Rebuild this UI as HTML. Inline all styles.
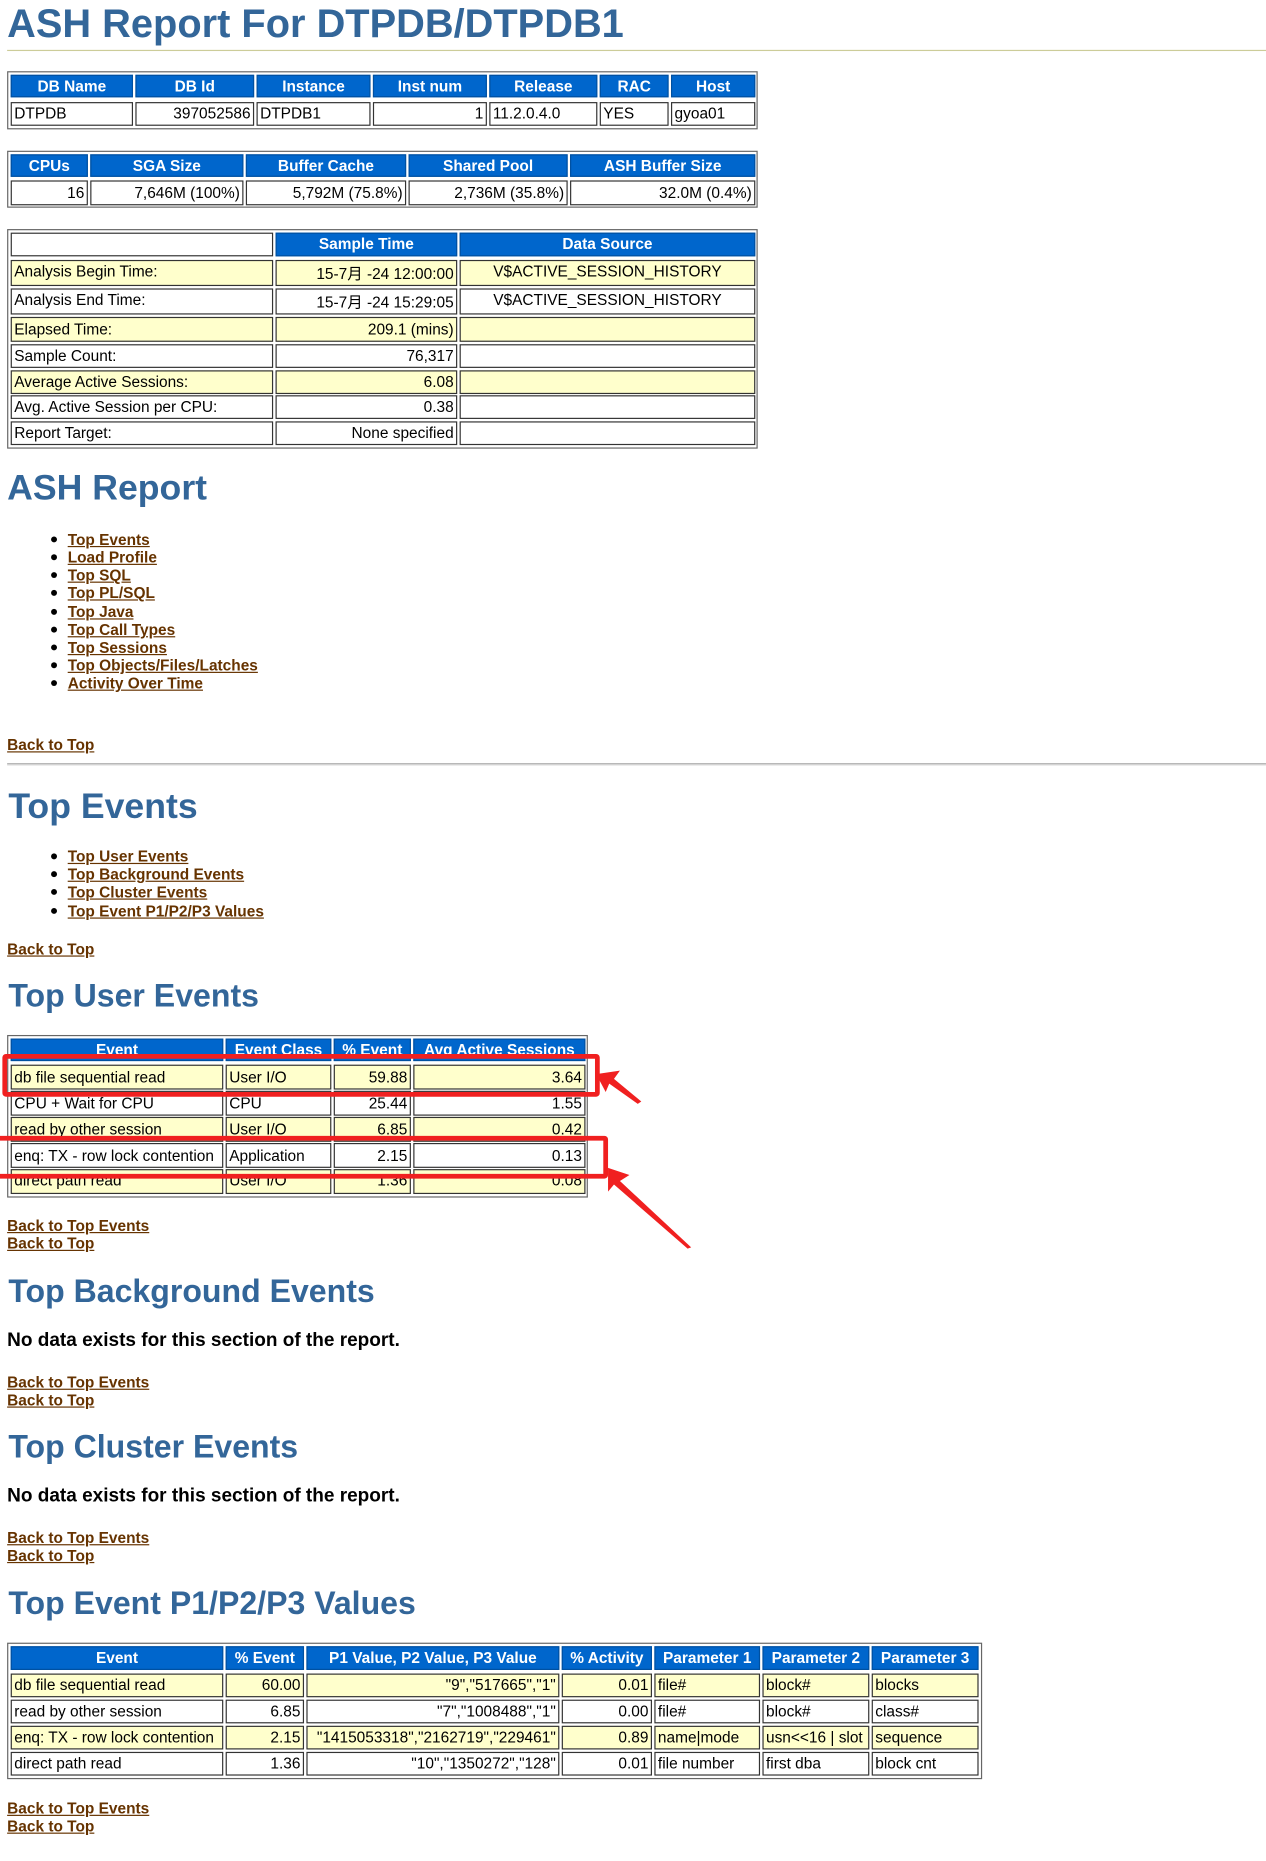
<!DOCTYPE html>
<html><head><meta charset="utf-8"><style>
html,body{margin:0;padding:0;background:#fff;width:1266px;height:1861px;overflow:hidden}
#w{position:absolute;left:0;top:0;width:1066px;height:1568px;transform:scale(1.1876,1.1869);transform-origin:0 0;font-family:"Liberation Sans","Noto Sans CJK SC",sans-serif}
#w div{position:absolute;box-sizing:border-box;white-space:nowrap}
.o{border:1px solid #666;}
.c{border:1px solid #333;font-size:13px;padding:0 2px;overflow:hidden;background:#fff;color:#000}
.h{background:#0066cc;color:#fff;font-weight:bold;text-align:center;border-color:#0050a0!important}
.y{background:#ffffcc}
.r{text-align:right}
.ctr{text-align:center}
.t{color:#336699;font-weight:bold}
.l{font-size:13px;font-weight:bold;color:#663300;text-decoration:underline;line-height:15px}
.b{width:5px;height:5px;border-radius:50%;background:#000}
.rb{border:4px solid #f02020;border-radius:3px}
</style></head><body><div id="w">
<div class="t" style="left:6px;top:2px;font-size:33.5px;line-height:38px">ASH Report For DTPDB/DTPDB1</div>
<div style="left:6px;top:42px;width:1060px;height:1px;background:#cccc99"></div>

<div class="o" style="left:6px;top:60px;width:632px;height:49px"></div>
<div class="c h" style="left:9px;top:63px;width:103px;height:19px;line-height:17px">DB Name</div>
<div class="c h" style="left:114px;top:63px;width:100px;height:19px;line-height:17px">DB Id</div>
<div class="c h" style="left:216px;top:63px;width:96px;height:19px;line-height:17px">Instance</div>
<div class="c h" style="left:314px;top:63px;width:96px;height:19px;line-height:17px">Inst num</div>
<div class="c h" style="left:412px;top:63px;width:91px;height:19px;line-height:17px">Release</div>
<div class="c h" style="left:505px;top:63px;width:58px;height:19px;line-height:17px">RAC</div>
<div class="c h" style="left:565px;top:63px;width:71px;height:19px;line-height:17px">Host</div>
<div class="c" style="left:9px;top:86px;width:103px;height:20px;line-height:18px">DTPDB</div>
<div class="c r" style="left:114px;top:86px;width:100px;height:20px;line-height:18px">397052586</div>
<div class="c" style="left:216px;top:86px;width:96px;height:20px;line-height:18px">DTPDB1</div>
<div class="c r" style="left:314px;top:86px;width:96px;height:20px;line-height:18px">1</div>
<div class="c" style="left:412px;top:86px;width:91px;height:20px;line-height:18px">11.2.0.4.0</div>
<div class="c" style="left:505px;top:86px;width:58px;height:20px;line-height:18px">YES</div>
<div class="c" style="left:565px;top:86px;width:71px;height:20px;line-height:18px">gyoa01</div>

<div class="o" style="left:6px;top:127px;width:632px;height:48px"></div>
<div class="c h" style="left:9px;top:130px;width:65px;height:19px;line-height:17px">CPUs</div>
<div class="c h" style="left:76px;top:130px;width:129px;height:19px;line-height:17px">SGA Size</div>
<div class="c h" style="left:207px;top:130px;width:135px;height:19px;line-height:17px">Buffer Cache</div>
<div class="c h" style="left:344px;top:130px;width:134px;height:19px;line-height:17px">Shared Pool</div>
<div class="c h" style="left:480px;top:130px;width:156px;height:19px;line-height:17px">ASH Buffer Size</div>
<div class="c r" style="left:9px;top:152px;width:65px;height:21px;line-height:19px">16</div>
<div class="c r" style="left:76px;top:152px;width:129px;height:21px;line-height:19px">7,646M (100%)</div>
<div class="c r" style="left:207px;top:152px;width:135px;height:21px;line-height:19px">5,792M (75.8%)</div>
<div class="c r" style="left:344px;top:152px;width:134px;height:21px;line-height:19px">2,736M (35.8%)</div>
<div class="c r" style="left:480px;top:152px;width:156px;height:21px;line-height:19px">32.0M (0.4%)</div>

<div class="o" style="left:6px;top:193px;width:632px;height:185px"></div>
<div class="c" style="left:9px;top:196px;width:221px;height:20px"></div>
<div class="c h" style="left:232px;top:196px;width:153px;height:20px;line-height:18px">Sample Time</div>
<div class="c h" style="left:387px;top:196px;width:249px;height:20px;line-height:18px">Data Source</div>

<div class="c y" style="left:9px;top:219px;width:221px;height:22px;line-height:18px">Analysis Begin Time:</div>
<div class="c y r" style="left:232px;top:219px;width:153px;height:22px;line-height:22px">15-7月 -24 12:00:00</div>
<div class="c y ctr" style="left:387px;top:219px;width:249px;height:22px;line-height:18px">V$ACTIVE_SESSION_HISTORY</div>
<div class="c" style="left:9px;top:243px;width:221px;height:22px;line-height:18px">Analysis End Time:</div>
<div class="c r" style="left:232px;top:243px;width:153px;height:22px;line-height:22px">15-7月 -24 15:29:05</div>
<div class="c ctr" style="left:387px;top:243px;width:249px;height:22px;line-height:18px">V$ACTIVE_SESSION_HISTORY</div>
<div class="c y" style="left:9px;top:267px;width:221px;height:21px;line-height:19px">Elapsed Time:</div>
<div class="c y r" style="left:232px;top:267px;width:153px;height:21px;line-height:19px">209.1 (mins)</div>
<div class="c y" style="left:387px;top:267px;width:249px;height:21px"></div>
<div class="c" style="left:9px;top:290px;width:221px;height:20px;line-height:18px">Sample Count:</div>
<div class="c r" style="left:232px;top:290px;width:153px;height:20px;line-height:18px">76,317</div>
<div class="c" style="left:387px;top:290px;width:249px;height:20px"></div>
<div class="c y" style="left:9px;top:312px;width:221px;height:20px;line-height:18px">Average Active Sessions:</div>
<div class="c y r" style="left:232px;top:312px;width:153px;height:20px;line-height:18px">6.08</div>
<div class="c y" style="left:387px;top:312px;width:249px;height:20px"></div>
<div class="c" style="left:9px;top:333px;width:221px;height:20px;line-height:18px">Avg. Active Session per CPU:</div>
<div class="c r" style="left:232px;top:333px;width:153px;height:20px;line-height:18px">0.38</div>
<div class="c" style="left:387px;top:333px;width:249px;height:20px"></div>
<div class="c" style="left:9px;top:355px;width:221px;height:20px;line-height:18px">Report Target:</div>
<div class="c r" style="left:232px;top:355px;width:153px;height:20px;line-height:18px">None specified</div>
<div class="c" style="left:387px;top:355px;width:249px;height:20px"></div>

<div class="t" style="left:6px;top:394px;font-size:30px;line-height:36px">ASH Report</div>
<div class="b" style="left:43px;top:452px"></div><div class="l" style="left:57px;top:447px">Top Events</div>
<div class="b" style="left:43px;top:467px"></div><div class="l" style="left:57px;top:462px">Load Profile</div>
<div class="b" style="left:43px;top:482px"></div><div class="l" style="left:57px;top:477px">Top SQL</div>
<div class="b" style="left:43px;top:497px"></div><div class="l" style="left:57px;top:492px">Top PL/SQL</div>
<div class="b" style="left:43px;top:513px"></div><div class="l" style="left:57px;top:508px">Top Java</div>
<div class="b" style="left:43px;top:528px"></div><div class="l" style="left:57px;top:523px">Top Call Types</div>
<div class="b" style="left:43px;top:543px"></div><div class="l" style="left:57px;top:538px">Top Sessions</div>
<div class="b" style="left:43px;top:558px"></div><div class="l" style="left:57px;top:553px">Top Objects/Files/Latches</div>
<div class="b" style="left:43px;top:573px"></div><div class="l" style="left:57px;top:568px">Activity Over Time</div>
<div class="l" style="left:6px;top:620px">Back to Top</div>
<div style="left:6px;top:643px;width:1060px;height:2px;border-top:1px solid #aaa;border-bottom:1px solid #ddd"></div>

<div class="t" style="left:7px;top:662px;font-size:30px;line-height:36px">Top Events</div>
<div class="b" style="left:43px;top:719px"></div><div class="l" style="left:57px;top:714px">Top User Events</div>
<div class="b" style="left:43px;top:734px"></div><div class="l" style="left:57px;top:729px">Top Background Events</div>
<div class="b" style="left:43px;top:749px"></div><div class="l" style="left:57px;top:744px">Top Cluster Events</div>
<div class="b" style="left:43px;top:765px"></div><div class="l" style="left:57px;top:760px">Top Event P1/P2/P3 Values</div>
<div class="l" style="left:6px;top:792px">Back to Top</div>

<div class="t" style="left:7px;top:822px;font-size:27px;line-height:34px">Top User Events</div>
<div class="o" style="left:6px;top:872px;width:489px;height:137px"></div>
<div class="c h" style="left:9px;top:875px;width:179px;height:19px;line-height:17px">Event</div>
<div class="c h" style="left:190px;top:875px;width:89px;height:19px;line-height:17px">Event Class</div>
<div class="c h" style="left:281px;top:875px;width:65px;height:19px;line-height:17px">% Event</div>
<div class="c h" style="left:348px;top:875px;width:145px;height:19px;line-height:17px">Avg Active Sessions</div>
<div class="c y" style="left:9px;top:897px;width:179px;height:21px;line-height:19px">db file sequential read</div>
<div class="c y" style="left:190px;top:897px;width:89px;height:21px;line-height:19px">User I/O</div>
<div class="c y r" style="left:281px;top:897px;width:65px;height:21px;line-height:19px">59.88</div>
<div class="c y r" style="left:348px;top:897px;width:145px;height:21px;line-height:19px">3.64</div>
<div class="c" style="left:9px;top:919px;width:179px;height:21px;line-height:19px">CPU + Wait for CPU</div>
<div class="c" style="left:190px;top:919px;width:89px;height:21px;line-height:19px">CPU</div>
<div class="c r" style="left:281px;top:919px;width:65px;height:21px;line-height:19px">25.44</div>
<div class="c r" style="left:348px;top:919px;width:145px;height:21px;line-height:19px">1.55</div>
<div class="c y" style="left:9px;top:941px;width:179px;height:21px;line-height:19px">read by other session</div>
<div class="c y" style="left:190px;top:941px;width:89px;height:21px;line-height:19px">User I/O</div>
<div class="c y r" style="left:281px;top:941px;width:65px;height:21px;line-height:19px">6.85</div>
<div class="c y r" style="left:348px;top:941px;width:145px;height:21px;line-height:19px">0.42</div>
<div class="c" style="left:9px;top:963px;width:179px;height:21px;line-height:19px">enq: TX - row lock contention</div>
<div class="c" style="left:190px;top:963px;width:89px;height:21px;line-height:19px">Application</div>
<div class="c r" style="left:281px;top:963px;width:65px;height:21px;line-height:19px">2.15</div>
<div class="c r" style="left:348px;top:963px;width:145px;height:21px;line-height:19px">0.13</div>
<div class="c y" style="left:9px;top:985px;width:179px;height:21px;line-height:17px">direct path read</div>
<div class="c y" style="left:190px;top:985px;width:89px;height:21px;line-height:17px">User I/O</div>
<div class="c y r" style="left:281px;top:985px;width:65px;height:21px;line-height:17px">1.36</div>
<div class="c y r" style="left:348px;top:985px;width:145px;height:21px;line-height:17px">0.08</div>
<div class="rb" style="left:2px;top:888px;width:503px;height:36px"></div>
<div class="rb" style="left:-4px;top:957px;width:516px;height:36px"></div>
<svg style="position:absolute;left:0;top:0" width="1066" height="1100">
<polygon fill="#f02020" points="502,905 522,902 517,909 540,928 537,930 513,913 510,920"/>
<polygon fill="#f02020" points="512,984 530,990 522,995 582,1051 579,1052 517,998 512,1004"/>
</svg>
<div class="l" style="left:6px;top:1025px">Back to Top Events</div>
<div class="l" style="left:6px;top:1040px">Back to Top</div>

<div class="t" style="left:7px;top:1071px;font-size:27px;line-height:34px">Top Background Events</div>
<div style="left:6px;top:1120px;font-size:16px;font-weight:bold;line-height:20px">No data exists for this section of the report.</div>
<div class="l" style="left:6px;top:1157px">Back to Top Events</div>
<div class="l" style="left:6px;top:1172px">Back to Top</div>

<div class="t" style="left:7px;top:1202px;font-size:27px;line-height:34px">Top Cluster Events</div>
<div style="left:6px;top:1251px;font-size:16px;font-weight:bold;line-height:20px">No data exists for this section of the report.</div>
<div class="l" style="left:6px;top:1288px">Back to Top Events</div>
<div class="l" style="left:6px;top:1303px">Back to Top</div>

<div class="t" style="left:7px;top:1334px;font-size:27px;line-height:34px">Top Event P1/P2/P3 Values</div>
<div class="o" style="left:6px;top:1384px;width:821px;height:115px"></div>
<div class="c h" style="left:9px;top:1387px;width:179px;height:20px;line-height:18px">Event</div>
<div class="c h" style="left:190px;top:1387px;width:66px;height:20px;line-height:18px">% Event</div>
<div class="c h" style="left:258px;top:1387px;width:213px;height:20px;line-height:18px">P1 Value, P2 Value, P3 Value</div>
<div class="c h" style="left:473px;top:1387px;width:76px;height:20px;line-height:18px">% Activity</div>
<div class="c h" style="left:551px;top:1387px;width:89px;height:20px;line-height:18px">Parameter 1</div>
<div class="c h" style="left:642px;top:1387px;width:90px;height:20px;line-height:18px">Parameter 2</div>
<div class="c h" style="left:734px;top:1387px;width:90px;height:20px;line-height:18px">Parameter 3</div>

<div class="c y" style="left:9px;top:1410px;width:179px;height:20px;line-height:18px">db file sequential read</div>
<div class="c y r" style="left:190px;top:1410px;width:66px;height:20px;line-height:18px">60.00</div>
<div class="c y r" style="left:258px;top:1410px;width:213px;height:20px;line-height:18px">"9","517665","1"</div>
<div class="c y r" style="left:473px;top:1410px;width:76px;height:20px;line-height:18px">0.01</div>
<div class="c y" style="left:551px;top:1410px;width:89px;height:20px;line-height:18px">file#</div>
<div class="c y" style="left:642px;top:1410px;width:90px;height:20px;line-height:18px">block#</div>
<div class="c y" style="left:734px;top:1410px;width:90px;height:20px;line-height:18px">blocks</div>

<div class="c" style="left:9px;top:1432px;width:179px;height:20px;line-height:18px">read by other session</div>
<div class="c r" style="left:190px;top:1432px;width:66px;height:20px;line-height:18px">6.85</div>
<div class="c r" style="left:258px;top:1432px;width:213px;height:20px;line-height:18px">"7","1008488","1"</div>
<div class="c r" style="left:473px;top:1432px;width:76px;height:20px;line-height:18px">0.00</div>
<div class="c" style="left:551px;top:1432px;width:89px;height:20px;line-height:18px">file#</div>
<div class="c" style="left:642px;top:1432px;width:90px;height:20px;line-height:18px">block#</div>
<div class="c" style="left:734px;top:1432px;width:90px;height:20px;line-height:18px">class#</div>

<div class="c y" style="left:9px;top:1454px;width:179px;height:20px;line-height:18px">enq: TX - row lock contention</div>
<div class="c y r" style="left:190px;top:1454px;width:66px;height:20px;line-height:18px">2.15</div>
<div class="c y r" style="left:258px;top:1454px;width:213px;height:20px;line-height:18px">"1415053318","2162719","229461"</div>
<div class="c y r" style="left:473px;top:1454px;width:76px;height:20px;line-height:18px">0.89</div>
<div class="c y" style="left:551px;top:1454px;width:89px;height:20px;line-height:18px">name|mode</div>
<div class="c y" style="left:642px;top:1454px;width:90px;height:20px;line-height:18px">usn&lt;&lt;16 | slot</div>
<div class="c y" style="left:734px;top:1454px;width:90px;height:20px;line-height:18px">sequence</div>

<div class="c" style="left:9px;top:1476px;width:179px;height:20px;line-height:18px">direct path read</div>
<div class="c r" style="left:190px;top:1476px;width:66px;height:20px;line-height:18px">1.36</div>
<div class="c r" style="left:258px;top:1476px;width:213px;height:20px;line-height:18px">"10","1350272","128"</div>
<div class="c r" style="left:473px;top:1476px;width:76px;height:20px;line-height:18px">0.01</div>
<div class="c" style="left:551px;top:1476px;width:89px;height:20px;line-height:18px">file number</div>
<div class="c" style="left:642px;top:1476px;width:90px;height:20px;line-height:18px">first dba</div>
<div class="c" style="left:734px;top:1476px;width:90px;height:20px;line-height:18px">block cnt</div>

<div class="l" style="left:6px;top:1516px">Back to Top Events</div>
<div class="l" style="left:6px;top:1531px">Back to Top</div>
</div></body></html>
